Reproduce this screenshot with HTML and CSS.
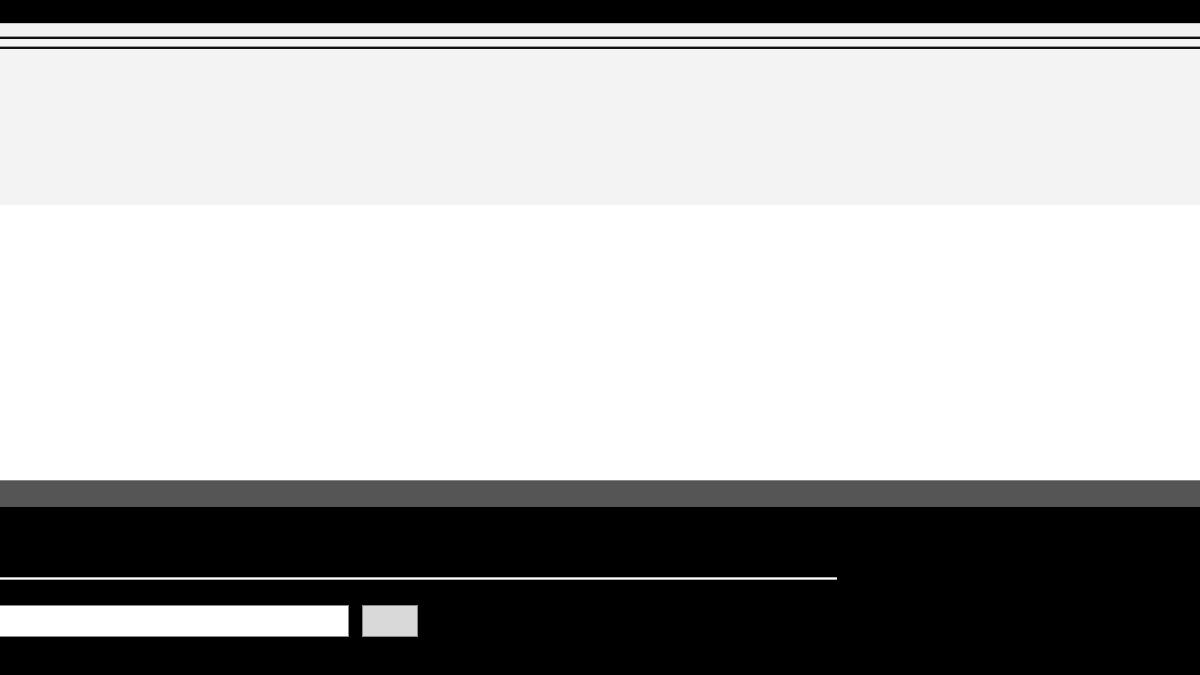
FILE: index.html
```html
<!DOCTYPE html>
<html>
<head>
<meta charset="utf-8">
<link rel="stylesheet" href="styles.css">
</head>
<body>
<div class="topbar"></div>
<div class="hero">
  <div class="rule rule-a"></div>
  <div class="rule rule-b"></div>
</div>
<div class="content"></div>
<div class="strip"></div>
<div class="footer">
  <div class="footer-rule"></div>
  <form class="subscribe">
    <input class="field" type="text" aria-label="Email">
    <button class="btn" type="button"></button>
  </form>
</div>
</body>
</html>
```
FILE: styles.css
```css
html, body {
  margin: 0;
  padding: 0;
  background: #000;
  font-family: "Liberation Sans", Arial, sans-serif;
}
.topbar {
  height: 23px;
  background: #000;
}
.hero {
  height: 182px;
  background: #f3f3f3;
  box-sizing: border-box;
  border-top: 1px solid #c8c8c8;
  padding-top: 12px;
}
.rule {
  height: 0;
  border-top: 1px solid #9a9a9a;
  border-bottom: 2px solid #111;
}
.rule-b {
  margin-top: 7px;
}
.content {
  height: 275px;
  background: #fff;
}
.strip {
  height: 27px;
  box-sizing: border-box;
  background: #555;
  border-top: 1px solid #8a8a8a;
}
.footer {
  height: 168px;
  background: #000;
  padding-top: 70px;
  box-sizing: border-box;
}
.footer-rule {
  width: 837px;
  height: 1px;
  background: #fff;
  border-top: 1px solid #aaa;
  border-bottom: 1px solid #aaa;
}
.subscribe {
  display: flex;
  gap: 13px;
  margin: 25px 0 0 0;
}
.field {
  width: 349px;
  height: 32px;
  box-sizing: border-box;
  margin: 0;
  padding: 0 8px;
  background: #fff;
  border: 1px solid #8a8a8a;
  border-left: none;
  font: 14px "Liberation Sans", Arial, sans-serif;
}
.btn {
  width: 56px;
  height: 32px;
  box-sizing: border-box;
  margin: 0;
  padding: 0;
  background: #d9d9d9;
  border: 1px solid #8a8a8a;
}
```
